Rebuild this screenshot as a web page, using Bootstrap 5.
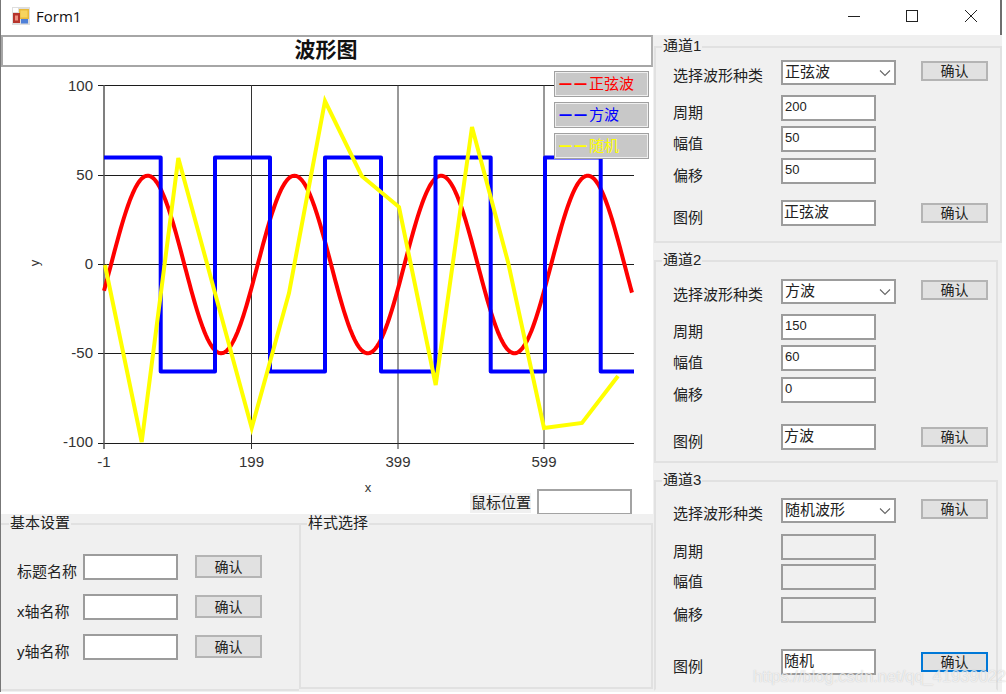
<!DOCTYPE html>
<html lang="zh-CN">
<head>
<meta charset="utf-8">
<title>Form1</title>
<link href="https://cdn.jsdelivr.net/npm/bootstrap@5.3.0/dist/css/bootstrap.min.css" rel="stylesheet">
<style>
html,body{margin:0;height:694px;width:1006px;overflow:hidden;background:#fff}
body{font-family:"Liberation Sans","Noto Sans CJK SC",sans-serif;font-size:15px;line-height:20px;color:#222}
.shell{position:relative;width:1002px;height:692px;border-left:1px solid #777;border-right:2px solid #6e6e6e}
.capbar{height:35px;background:#fff;padding-bottom:4px}
.cap-title{font-family:"Open Sans",sans-serif;font-size:15px;color:#111;margin-left:6px}
.cap-icon{margin-left:11px}
.cap-btn{width:58.5px;display:flex;justify-content:center}
.work{height:657px}
.lcol{width:652px;flex:none}
.rcol{width:349px;flex:none;background:#f0f0f0}
.headline{height:32px;border:2px solid #a6a6a6;border-right-color:#b0b0b0;text-align:center;font-size:21px;font-weight:700;line-height:25px;color:#111;background:#fff;padding-right:2px}
.plot{position:relative;height:447px;overflow:hidden;background:#fff}
.plot svg{display:block}
.plot text{font-family:"Liberation Sans",sans-serif;fill:#333}
.keys{position:absolute;left:553px;top:4px;width:95px;gap:5px}
.keybox{height:26px;background:#c8c8c8;border:1px solid #a0a0a0;box-shadow:inset 0 0 0 1px #efefef;padding-left:4px;line-height:23px;font-size:15px;white-space:nowrap}
.dash{display:inline-block;width:15px;font-size:13px;font-weight:700;line-height:20px}
.k-red{color:#f00}.k-blue{color:#00f}.k-yel{color:#ff0}
.mouse-pos{position:absolute;left:469px;top:422px}
.mouse-lab{background:#f0f0f0;height:20px;margin-top:4px;margin-right:6px;padding:0;width:61px;text-align:right}
.tbx-plain{width:95px;height:26px;flex:none;background:#fff;border:2px solid #a3a3a3;border-radius:0}
.lower{height:178px;background:#f0f0f0;padding-top:9px}
.gbox{border:2px solid #e1e1e1}
.gbox-cap{display:block;width:fit-content;background:#f0f0f0;margin:-12px 0 0 6px;padding:0 1px;height:20px;line-height:20px;color:#222}
.lg-basic{width:298px;height:168px;border-left:0;border-right:0}
.lg-style{width:354px;height:166px}
.lg-basic .gbox-cap{margin-left:8px}
.ch1{margin:11px 0 0 1px;height:197px}
.ch2{margin:17px 4px 0 1px;height:203px}
.ch3{margin:17px 4px 0 1px;height:211px;border-bottom-color:#f0f0f0}
.ctl-row{display:flex;height:26px;padding-left:17px}
.lower .ctl-row{padding-left:16px}
.lab-r{width:108px;flex:none;padding-top:8px}
.lab-b{width:66px;flex:none;padding-top:8px;white-space:nowrap}
.lab-s{padding-top:6px}
.form-control.tbx{width:95px;height:26px;flex:none;border:2px solid #9c9c9c;border-radius:0;background-color:#fff;padding:0 2px 4px;font-size:13px;line-height:16px;color:#222;font-family:inherit;min-height:0;box-shadow:none}
.form-control.tbx-cjk{font-size:15px;padding:0 1px 5px}
.form-control.tbx:disabled{background-color:#f0f0f0;opacity:1}
.form-select.cbo{width:115px;height:25px;flex:none;border:2px solid #9c9c9c;border-radius:0;padding:0 2px 2px;font-size:15px;line-height:18px;color:#222;font-family:inherit;background-color:#fff;background-size:16px 10px;background-position:right 1px center;background-image:url("data:image/svg+xml,%3csvg xmlns='http://www.w3.org/2000/svg' viewBox='0 0 16 10'%3e%3cpath fill='none' stroke='%23666' stroke-width='1.1' d='M3 2.5l5 5 5-5'/%3e%3c/svg%3e")}
.btn.act{width:67px;height:20px;padding:0;border:2px solid #b4b4b4;border-radius:0;background:#e1e1e1;color:#222;font-size:14px;line-height:15px;flex:none}
.act-sel{margin:1px 0 0 25px}
.act-leg{margin:3px 0 0 45px}
.btn.act-low{height:23px;margin:1px 0 0 17px;line-height:18px}
.btn.act.act-focus{border-color:#0078d7}
.m4{margin-top:4px}.m5{margin-top:5px}.m6{margin-top:6px}.m7{margin-top:7px}.m8{margin-top:8px}.m9{margin-top:9px}.m10{margin-top:10px}.m14{margin-top:14px}.m16{margin-top:16px}.m21{margin-top:21px}.m26{margin-top:26px}
.wmark{position:absolute;left:752px;top:666px;font-size:16.5px;line-height:20px;white-space:nowrap;color:rgba(255,255,255,.72);text-shadow:0 0 1px rgba(90,90,90,.35)}
</style>
</head>
<body>
<div class="shell">
  <div class="capbar d-flex align-items-center">
    <svg class="cap-icon" width="18" height="18" viewBox="0 0 18 18">
      <rect width="18" height="18" fill="#dedede"/>
      <rect x="1" y="1" width="5" height="4" fill="#fff"/>
      <rect x="7" y="2" width="10" height="10" fill="#e8b93a"/>
      <rect x="8.5" y="3.5" width="7" height="7" fill="#f6d45e"/>
      <rect x="1" y="6" width="7" height="10" fill="#b6342c"/>
      <rect x="3" y="8.5" width="3" height="5" fill="#ee8f80"/>
      <rect x="9" y="12" width="7" height="4.5" fill="#4f80d8"/>
    </svg>
    <span class="cap-title">Form1</span>
    <div class="d-flex ms-auto">
      <div class="cap-btn"><svg width="14" height="14" viewBox="0 0 14 14"><path d="M1 7.5h12" stroke="#222" fill="none"/></svg></div>
      <div class="cap-btn"><svg width="14" height="14" viewBox="0 0 14 14"><rect x="1.5" y="1.5" width="11" height="11" stroke="#222" fill="none"/></svg></div>
      <div class="cap-btn"><svg width="14" height="14" viewBox="0 0 14 14"><path d="M1 1l12 12M13 1L1 13" stroke="#222" fill="none"/></svg></div>
    </div>
  </div>

  <div class="work d-flex">
    <div class="lcol">
      <div class="headline">波形图</div>
      <div class="plot">
        <svg width="652" height="447" viewBox="1 67 652 447">
          <g stroke="#1c1c1c" stroke-width="1" fill="none">
            <path d="M98 85.5H634M98 175.5H634M98 264.5H634M98 353.5H634M98 443.5H634"/>
            <path d="M251.5 85V449M398 85V449M544 85V449" stroke="#333"/>
            <path d="M104 85V449" stroke="#555" stroke-width="1.5"/>
          </g>
          <polyline id="sineLine" fill="none" stroke="#f00" stroke-width="4" stroke-linejoin="round"/>
          <polyline fill="none" stroke="#00f" stroke-width="4" stroke-linejoin="round" points="104,157.5 160.7,157.5 160.7,371.5 215,371.5 215,157.5 270,157.5 270,371.5 325,371.5 325,157.5 381,157.5 381,371.5 435.5,371.5 435.5,157.5 490.7,157.5 490.7,371.5 545,371.5 545,157.5 600.7,157.5 600.7,371.5 634,371.5"/>
          <polyline fill="none" stroke="#ff0" stroke-width="4" stroke-linejoin="miter" points="105,265 141.7,442 178.3,158 251.7,428 289,293 325,101 361.7,176 399,207 435.7,385 472,127 508,262 544,428 582,423 618,376"/>
          <g font-size="15" text-anchor="end">
            <text x="93" y="90.5">100</text>
            <text x="93" y="180">50</text>
            <text x="93" y="269">0</text>
            <text x="93" y="358">-50</text>
            <text x="93" y="446.5">-100</text>
          </g>
          <g font-size="15" text-anchor="middle">
            <text x="104" y="467">-1</text>
            <text x="251.5" y="467">199</text>
            <text x="398" y="467">399</text>
            <text x="544" y="467">599</text>
          </g>
          <text x="368" y="492" font-size="13" text-anchor="middle">x</text>
          <text transform="translate(39 263) rotate(-90)" font-size="13" text-anchor="middle">y</text>
        </svg>
        <div class="keys d-flex flex-column">
          <div class="keybox k-red"><span class="dash">一</span><span class="dash">一</span>正弦波</div>
          <div class="keybox k-blue"><span class="dash">一</span><span class="dash">一</span>方波</div>
          <div class="keybox k-yel"><span class="dash">一</span><span class="dash">一</span>随机</div>
        </div>
        <div class="mouse-pos d-flex">
          <div class="mouse-lab">鼠标位置</div>
          <div class="tbx-plain"></div>
        </div>
      </div>
      <div class="lower d-flex">
        <div class="gbox lg-basic">
          <span class="gbox-cap">基本设置</span>
          <div class="ctl-row m21"><div class="lab-b">标题名称</div><input class="form-control tbx" type="text" aria-label="标题名称"><button class="btn act act-low">确认</button></div>
          <div class="ctl-row m14"><div class="lab-b">x轴名称</div><input class="form-control tbx" type="text" aria-label="x轴名称"><button class="btn act act-low">确认</button></div>
          <div class="ctl-row m14"><div class="lab-b">y轴名称</div><input class="form-control tbx" type="text" aria-label="y轴名称"><button class="btn act act-low">确认</button></div>
        </div>
        <div class="gbox lg-style">
          <span class="gbox-cap">样式选择</span>
        </div>
      </div>
    </div>

    <div class="rcol">
      <div class="gbox ch1">
        <span class="gbox-cap">通道1</span>
        <div class="ctl-row m4"><div class="lab-r lab-s">选择波形种类</div><select class="form-select cbo" aria-label="波形种类"><option>正弦波</option></select><button class="btn act act-sel">确认</button></div>
        <div class="ctl-row m9"><div class="lab-r">周期</div><input class="form-control tbx" type="text" value="200" aria-label="周期"></div>
        <div class="ctl-row m5"><div class="lab-r">幅值</div><input class="form-control tbx" type="text" value="50" aria-label="幅值"></div>
        <div class="ctl-row m6"><div class="lab-r">偏移</div><input class="form-control tbx" type="text" value="50" aria-label="偏移"></div>
        <div class="ctl-row m16"><div class="lab-r">图例</div><input class="form-control tbx tbx-cjk" type="text" value="正弦波" aria-label="图例"><button class="btn act act-leg">确认</button></div>
      </div>
      <div class="gbox ch2">
        <span class="gbox-cap">通道2</span>
        <div class="ctl-row m9"><div class="lab-r lab-s">选择波形种类</div><select class="form-select cbo" aria-label="波形种类"><option>方波</option></select><button class="btn act act-sel">确认</button></div>
        <div class="ctl-row m9"><div class="lab-r">周期</div><input class="form-control tbx" type="text" value="150" aria-label="周期"></div>
        <div class="ctl-row m5"><div class="lab-r">幅值</div><input class="form-control tbx" type="text" value="60" aria-label="幅值"></div>
        <div class="ctl-row m6"><div class="lab-r">偏移</div><input class="form-control tbx" type="text" value="0" aria-label="偏移"></div>
        <div class="ctl-row m21"><div class="lab-r">图例</div><input class="form-control tbx tbx-cjk" type="text" value="方波" aria-label="图例"><button class="btn act act-leg">确认</button></div>
      </div>
      <div class="gbox ch3">
        <span class="gbox-cap">通道3</span>
        <div class="ctl-row m8"><div class="lab-r lab-s">选择波形种类</div><select class="form-select cbo" aria-label="波形种类"><option>随机波形</option></select><button class="btn act act-sel">确认</button></div>
        <div class="ctl-row m10"><div class="lab-r">周期</div><input class="form-control tbx" type="text" disabled aria-label="周期"></div>
        <div class="ctl-row m4"><div class="lab-r">幅值</div><input class="form-control tbx" type="text" disabled aria-label="幅值"></div>
        <div class="ctl-row m7"><div class="lab-r">偏移</div><input class="form-control tbx" type="text" disabled aria-label="偏移"></div>
        <div class="ctl-row m26"><div class="lab-r">图例</div><input class="form-control tbx tbx-cjk" type="text" value="随机" aria-label="图例"><button class="btn act act-leg act-focus">确认</button></div>
      </div>
    </div>
  </div>
  <div class="wmark">https://blog.csdn.net/qq_41939022</div>
</div>
<script src="https://cdn.jsdelivr.net/npm/bootstrap@5.3.0/dist/js/bootstrap.bundle.min.js"></script>
<script>
var pts=[];
for(var x=104;x<=632.5;x+=1.5){
  pts.push(x+","+(264.5-88.8*Math.cos(2*Math.PI*(x-147.7)/146.7)).toFixed(1));
}
document.getElementById("sineLine").setAttribute("points",pts.join(" "));
</script>
</body>
</html>
